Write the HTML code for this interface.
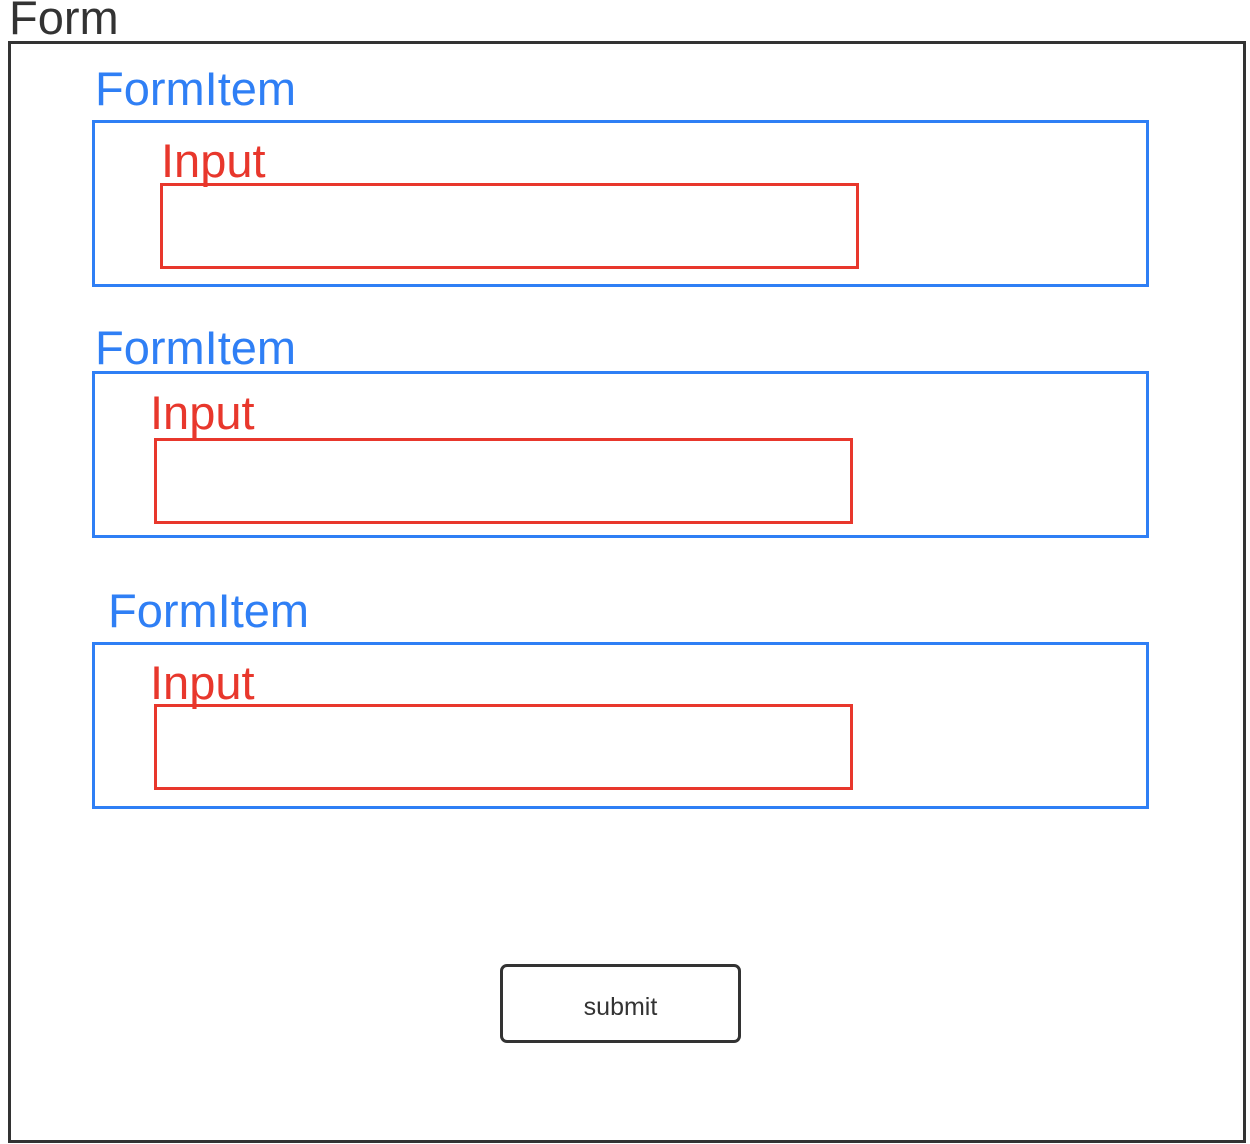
<!DOCTYPE html>
<html><head><meta charset="utf-8"><style>
html,body{margin:0;padding:0;background:#fff;width:1250px;height:1144px;overflow:hidden;position:relative;font-family:"Liberation Sans",sans-serif}
.t{position:absolute;font-size:47px;line-height:47px;white-space:nowrap}
.b{position:absolute;box-sizing:border-box;border:3px solid}
.blue{color:#2f7ff5;border-color:#2f7ff5}
.red{color:#e8372c;border-color:#e8372c}
.dark{color:#333;border-color:#333}
</style></head><body>
<div class="t dark" style="left:9px;top:-6px">Form</div>
<div class="b dark" style="left:8px;top:41px;width:1238px;height:1102px"></div>

<div class="t blue" style="left:95px;top:65px">FormItem</div>
<div class="b blue" style="left:92px;top:120px;width:1057px;height:167px"></div>
<div class="t red" style="left:161px;top:137px">Input</div>
<div class="b red" style="left:160px;top:183px;width:699px;height:86px"></div>

<div class="t blue" style="left:95px;top:324px">FormItem</div>
<div class="b blue" style="left:92px;top:371px;width:1057px;height:167px"></div>
<div class="t red" style="left:150px;top:389px">Input</div>
<div class="b red" style="left:154px;top:438px;width:699px;height:86px"></div>

<div class="t blue" style="left:108px;top:587px">FormItem</div>
<div class="b blue" style="left:92px;top:642px;width:1057px;height:167px"></div>
<div class="t red" style="left:150px;top:659px">Input</div>
<div class="b red" style="left:154px;top:704px;width:699px;height:86px"></div>

<div class="b dark" style="left:500px;top:964px;width:241px;height:79px;border-radius:7px;display:flex;align-items:center;justify-content:center;font-size:25px;color:#333;padding-top:7px">submit</div>
</body></html>
